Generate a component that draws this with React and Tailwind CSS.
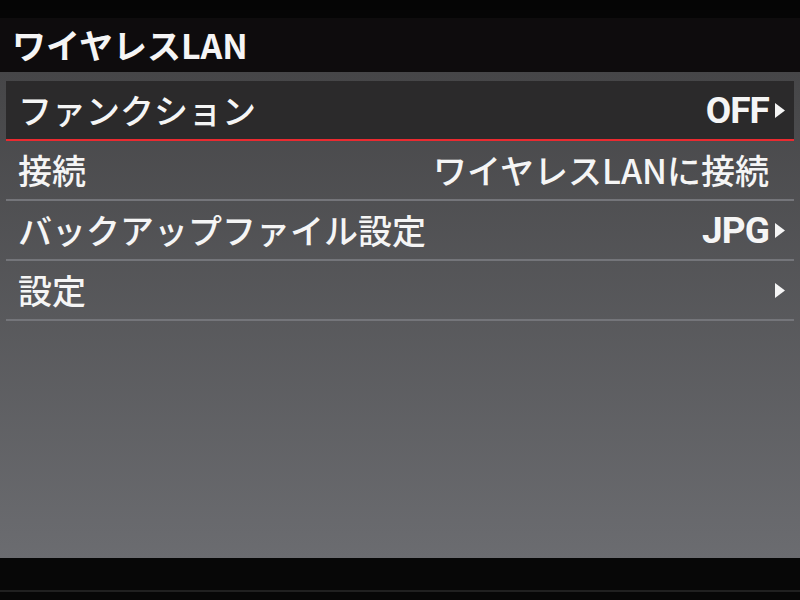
// App.jsx
import React from "react";

const rows = [
    { label: "ファンクション", value: "OFF", arrow: true, selected: true },
    { label: "接続", value: "ワイヤレスLANに接続", arrow: false },
    { label: "バックアップファイル設定", value: "JPG", arrow: true },
    { label: "設定", value: "", arrow: true },
];

const Arrow = ({ hidden }) => (
    <svg width="10" height="15" viewBox="0 0 10 15" className={hidden ? "ml-[6px] shrink-0 invisible" : "ml-[6px] shrink-0"}>
        <polygon points="0,0 10,7.5 0,15" fill="#f5f5f5" />
    </svg>
);

const App = () => {
    return (
        <div className="w-[800px] h-[600px] bg-[#050505] flex flex-col text-[#f5f5f5] font-['Noto_Sans_CJK_JP',sans-serif] overflow-hidden">
            <div className="h-[18px]" />
            {/* title */}
            <div className="h-[54px] bg-[#0e0c0d] flex items-center pl-[12px] text-[34px] font-bold leading-none">
                ワイヤレスLAN
            </div>

            {/* menu panel */}
            <div className="flex-1 bg-gradient-to-b from-[#464648] to-[#6b6c70] px-[6px] pt-[9px]">
                {rows.map((row) => (
                    <div
                        key={row.label}
                        className={
                            row.selected
                                ? "h-[60px] flex items-center justify-between bg-[#2b2a2b] border-b-2 border-[#ea2a30] pl-[12px] pr-[9px]"
                                : "h-[60px] flex items-center justify-between border-b-2 border-[#74757a] pl-[12px] pr-[9px]"
                        }
                    >
                        <span className="text-[34px] font-medium leading-none">{row.label}</span>
                        <div className="flex items-center">
                            {row.value && (
                                <span
                                    className={
                                        row.arrow
                                            ? "text-[37px] font-bold leading-none font-['Roboto',sans-serif] tracking-tight"
                                            : "text-[34px] font-medium leading-none"
                                    }
                                >
                                    {row.value}
                                </span>
                            )}
                            <Arrow hidden={!row.arrow} />
                        </div>
                    </div>
                ))}
            </div>

            {/* bottom bezel */}
            <div className="h-[42px] bg-[#070707] flex flex-col">
                <div className="h-[32px]" />
                <div className="h-[2px] bg-[#202020]" />
            </div>
        </div>
    );
};

export default App;
